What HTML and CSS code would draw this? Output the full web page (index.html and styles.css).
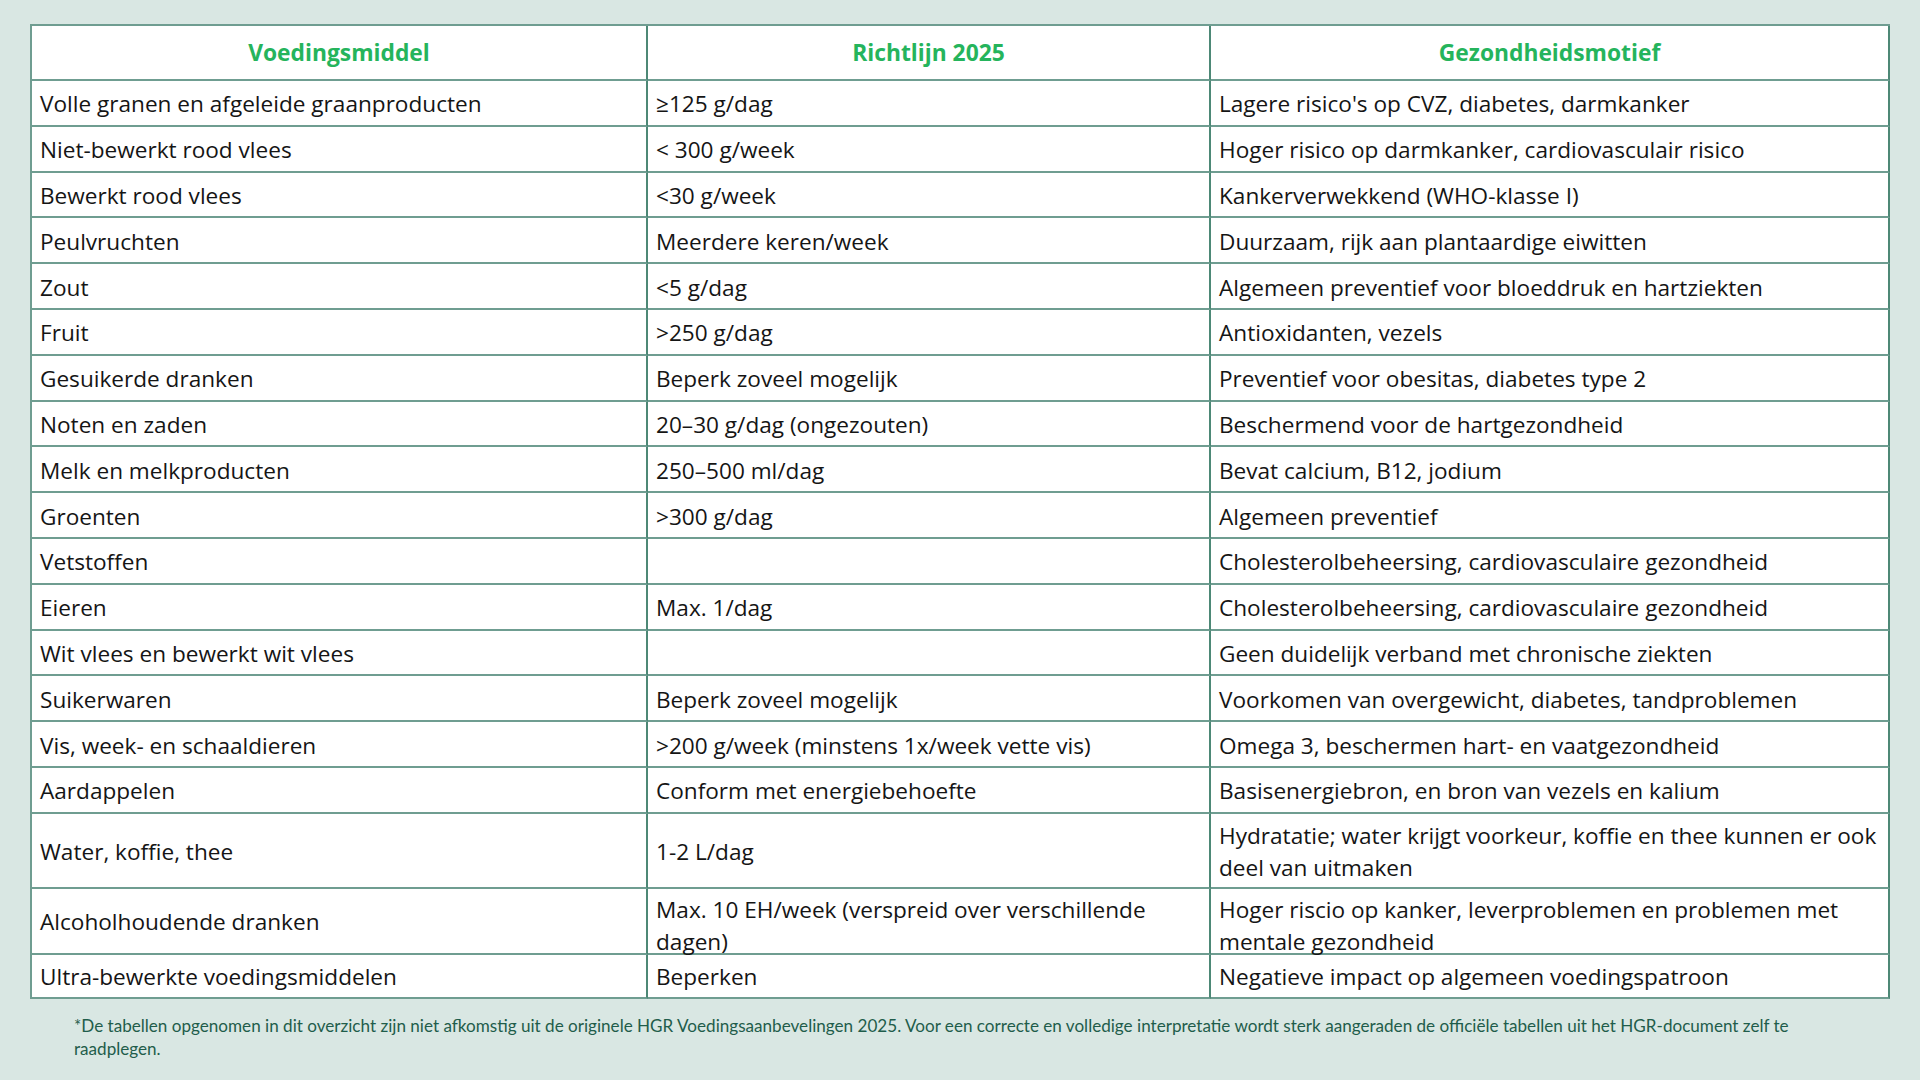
FILE: index.html
```html
<!DOCTYPE html>
<html lang="nl">
<head>
<meta charset="utf-8">
<title>Voedingsaanbevelingen 2025</title>
<link rel="stylesheet" href="styles.css">
</head>
<body>
<main class="page">
  <div class="grid">
    <div class="cell head">Voedingsmiddel</div>
    <div class="cell head">Richtlijn 2025</div>
    <div class="cell head">Gezondheidsmotief</div>

    <div class="cell">Volle granen en afgeleide graanproducten</div>
    <div class="cell">≥125 g/dag</div>
    <div class="cell">Lagere risico's op CVZ, diabetes, darmkanker</div>

    <div class="cell">Niet-bewerkt rood vlees</div>
    <div class="cell">&lt; 300 g/week</div>
    <div class="cell">Hoger risico op darmkanker, cardiovasculair risico</div>

    <div class="cell">Bewerkt rood vlees</div>
    <div class="cell">&lt;30 g/week</div>
    <div class="cell">Kankerverwekkend (WHO-klasse I)</div>

    <div class="cell">Peulvruchten</div>
    <div class="cell">Meerdere keren/week</div>
    <div class="cell">Duurzaam, rijk aan plantaardige eiwitten</div>

    <div class="cell">Zout</div>
    <div class="cell">&lt;5 g/dag</div>
    <div class="cell">Algemeen preventief voor bloeddruk en hartziekten</div>

    <div class="cell">Fruit</div>
    <div class="cell">&gt;250 g/dag</div>
    <div class="cell">Antioxidanten, vezels</div>

    <div class="cell">Gesuikerde dranken</div>
    <div class="cell">Beperk zoveel mogelijk</div>
    <div class="cell">Preventief voor obesitas, diabetes type 2</div>

    <div class="cell">Noten en zaden</div>
    <div class="cell">20–30 g/dag (ongezouten)</div>
    <div class="cell">Beschermend voor de hartgezondheid</div>

    <div class="cell">Melk en melkproducten</div>
    <div class="cell">250–500 ml/dag</div>
    <div class="cell">Bevat calcium, B12, jodium</div>

    <div class="cell">Groenten</div>
    <div class="cell">&gt;300 g/dag</div>
    <div class="cell">Algemeen preventief</div>

    <div class="cell">Vetstoffen</div>
    <div class="cell"></div>
    <div class="cell">Cholesterolbeheersing, cardiovasculaire gezondheid</div>

    <div class="cell">Eieren</div>
    <div class="cell">Max. 1/dag</div>
    <div class="cell">Cholesterolbeheersing, cardiovasculaire gezondheid</div>

    <div class="cell">Wit vlees en bewerkt wit vlees</div>
    <div class="cell"></div>
    <div class="cell">Geen duidelijk verband met chronische ziekten</div>

    <div class="cell">Suikerwaren</div>
    <div class="cell">Beperk zoveel mogelijk</div>
    <div class="cell">Voorkomen van overgewicht, diabetes, tandproblemen</div>

    <div class="cell">Vis, week- en schaaldieren</div>
    <div class="cell">&gt;200 g/week (minstens 1x/week vette vis)</div>
    <div class="cell">Omega 3, beschermen hart- en vaatgezondheid</div>

    <div class="cell">Aardappelen</div>
    <div class="cell">Conform met energiebehoefte</div>
    <div class="cell">Basisenergiebron, en bron van vezels en kalium</div>

    <div class="cell">Water, koffie, thee</div>
    <div class="cell">1-2 L/dag</div>
    <div class="cell">Hydratatie; water krijgt voorkeur, koffie en thee kunnen er ook deel van uitmaken</div>

    <div class="cell">Alcoholhoudende dranken</div>
    <div class="cell top">Max. 10 EH/week (verspreid over verschillende dagen)</div>
    <div class="cell top">Hoger riscio op kanker, leverproblemen en problemen met mentale gezondheid</div>

    <div class="cell">Ultra-bewerkte voedingsmiddelen</div>
    <div class="cell">Beperken</div>
    <div class="cell">Negatieve impact op algemeen voedingspatroon</div>
  </div>
  <p class="note">*De tabellen opgenomen in dit overzicht zijn niet afkomstig uit de originele HGR Voedingsaanbevelingen 2025. Voor een correcte en volledige interpretatie wordt sterk aangeraden de officiële tabellen uit het HGR-document zelf te raadplegen.</p>
</main>
</body>
</html>
```
FILE: styles.css
```css
* { box-sizing: border-box; }
html, body {
  margin: 0;
  padding: 0;
  background: #d9e7e3;
}
body {
  width: 1920px;
  height: 1080px;
  overflow: hidden;
  font-family: "Open Sans", "Liberation Sans", sans-serif;
}
.page {
  padding: 24px 30px 0 30px;
}
.grid {
  display: grid;
  width: 1860px;
  grid-template-columns: 616px 563px 679px;
  grid-template-rows: 55px repeat(16, 45.8px) 75px 66px 44px;
  background: #ffffff;
  border-top: 2px solid #6f9d91;
  border-left: 2px solid #6f9d91;
}
.cell {
  display: flex;
  align-items: center;
  padding: 3px 8px 0 8px;
  border-right: 2px solid #4d8876;
  border-bottom: 2px solid #6f9d91;
  font-size: 22.6px;
  line-height: 32px;
  color: #151515;
  min-width: 0;
}
.cell.top {
  align-items: flex-start;
  padding-top: 5px;
  overflow: visible;
}
.cell.head {
  justify-content: center;
  font-weight: 700;
  font-size: 22.8px;
  color: #25b45c;
  padding-top: 0;
}
.note {
  margin: 15px 0 0 44px;
  width: 1760px;
  font-family: "Lato", "Open Sans", sans-serif;
  font-size: 17.1px;
  line-height: 23.5px;
  color: #1f5d4b;
}
```
